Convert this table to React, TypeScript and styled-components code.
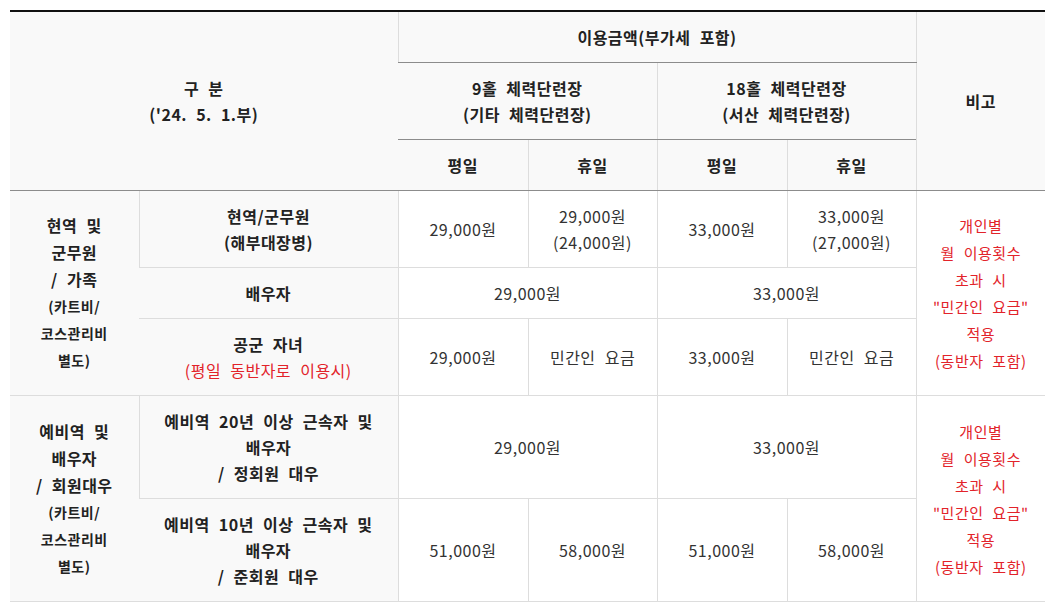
import styled, { createGlobalStyle } from 'styled-components';

const GlobalStyle = createGlobalStyle`
  body {
    margin: 0;
    background: #ffffff;
    font-family: 'Noto Sans CJK KR', 'Noto Sans', sans-serif;
  }
`

const Page = styled.div`
  padding: 10px;
`

const Table = styled.table`
  width: 1035px;
  border-collapse: collapse;
  table-layout: fixed;
  border-top: 2px solid #111111;
  font-size: 16px;
  line-height: 26px;
  letter-spacing: 0.5px;
  word-spacing: 5px;
  color: #333333;
`

const HeadCell = styled.th`
  padding: 12px 4px;
  background: #f9f9f9;
  font-weight: 700;
  color: #222222;
  text-align: center;
  vertical-align: middle;
  border-left: 1px solid #dddddd;
  border-bottom: 1px solid #8c8c8c;
  &:first-child { border-left: none; }
`

const Cell = styled.td<{ $shade?: boolean; $bold?: boolean; $last?: boolean }>`
  padding: 12px 4px;
  text-align: center;
  vertical-align: middle;
  background: ${p => (p.$shade ? '#f9f9f9' : '#ffffff')};
  font-weight: ${p => (p.$bold ? 700 : 400)};
  color: ${p => (p.$bold ? '#222222' : '#333333')};
  border-left: ${p => (p.$last ? 'none' : '1px solid #dddddd')};
  border-bottom: 1px solid #dddddd;
  &:first-child { border-left: none; }
`

const Group = styled.div`
  line-height: 27px;
`

const Note = styled.span`
  display: block;
  font-size: 14px;
`

const Red = styled.span`
  color: #e2232a;
  font-weight: 400;
`

const Remark = styled.div`
  color: #e2232a;
  font-size: 15px;
  line-height: 27px;
`

function RemarkText() {
    return (
        <Remark>
            개인별<br />
            월 이용횟수<br />
            초과 시<br />
            "민간인 요금"<br />
            적용<br />
            (동반자 포함)
        </Remark>
    )
}

export default function App() {
    return (
        <>
            <GlobalStyle />
            <Page>
                <Table>
                    <colgroup>
                        <col style={{ width: 129 }} />
                        <col style={{ width: 259 }} />
                        <col style={{ width: 130 }} />
                        <col style={{ width: 129 }} />
                        <col style={{ width: 130 }} />
                        <col style={{ width: 129 }} />
                        <col style={{ width: 129 }} />
                    </colgroup>
                    <thead>
                        <tr>
                            <HeadCell colSpan={2} rowSpan={3}>구 분<br />('24. 5. 1.부)</HeadCell>
                            <HeadCell colSpan={4}>이용금액(부가세 포함)</HeadCell>
                            <HeadCell rowSpan={3}>비고</HeadCell>
                        </tr>
                        <tr>
                            <HeadCell colSpan={2}>9홀 체력단련장<br />(기타 체력단련장)</HeadCell>
                            <HeadCell colSpan={2}>18홀 체력단련장<br />(서산 체력단련장)</HeadCell>
                        </tr>
                        <tr>
                            <HeadCell>평일</HeadCell>
                            <HeadCell>휴일</HeadCell>
                            <HeadCell>평일</HeadCell>
                            <HeadCell>휴일</HeadCell>
                        </tr>
                    </thead>
                    <tbody>
                        <tr>
                            <Cell $shade $bold rowSpan={3}>
                                <Group>
                                    현역 및<br />군무원<br />/ 가족
                                    <Note>(카트비/<br />코스관리비<br />별도)</Note>
                                </Group>
                            </Cell>
                            <Cell $shade $bold>현역/군무원<br />(해부대장병)</Cell>
                            <Cell>29,000원</Cell>
                            <Cell>29,000원<br />(24,000원)</Cell>
                            <Cell>33,000원</Cell>
                            <Cell>33,000원<br />(27,000원)</Cell>
                            <Cell rowSpan={3}><RemarkText /></Cell>
                        </tr>
                        <tr>
                            <Cell $shade $bold $last>배우자</Cell>
                            <Cell colSpan={2}>29,000원</Cell>
                            <Cell colSpan={2}>33,000원</Cell>
                        </tr>
                        <tr>
                            <Cell $shade $bold $last>공군 자녀<br /><Red>(평일 동반자로 이용시)</Red></Cell>
                            <Cell>29,000원</Cell>
                            <Cell>민간인 요금</Cell>
                            <Cell>33,000원</Cell>
                            <Cell>민간인 요금</Cell>
                        </tr>
                        <tr>
                            <Cell $shade $bold rowSpan={2}>
                                <Group>
                                    예비역 및<br />배우자<br />/ 회원대우
                                    <Note>(카트비/<br />코스관리비<br />별도)</Note>
                                </Group>
                            </Cell>
                            <Cell $shade $bold>예비역 20년 이상 근속자 및<br />배우자<br />/ 정회원 대우</Cell>
                            <Cell colSpan={2}>29,000원</Cell>
                            <Cell colSpan={2}>33,000원</Cell>
                            <Cell rowSpan={2}><RemarkText /></Cell>
                        </tr>
                        <tr>
                            <Cell $shade $bold $last>예비역 10년 이상 근속자 및<br />배우자<br />/ 준회원 대우</Cell>
                            <Cell>51,000원</Cell>
                            <Cell>58,000원</Cell>
                            <Cell>51,000원</Cell>
                            <Cell>58,000원</Cell>
                        </tr>
                    </tbody>
                </Table>
            </Page>
        </>
    )
}
